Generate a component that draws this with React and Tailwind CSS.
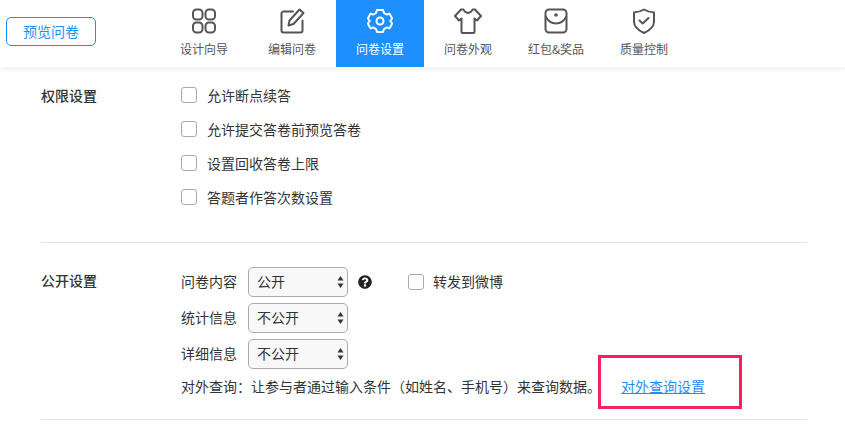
import React from "react";
import { FaQuestionCircle } from "react-icons/fa";

const font = { fontFamily: '"Noto Sans CJK SC", "Noto Sans", sans-serif' };

const GuideIcon = () => (
  <svg width="26" height="26" viewBox="0 0 26 26" fill="none" stroke="currentColor" strokeWidth="2">
    <rect x="2" y="1.5" width="9.5" height="10" rx="3.5" />
    <rect x="14.5" y="1.5" width="9.5" height="10" rx="3.5" />
    <rect x="2" y="14.5" width="9.5" height="10" rx="3.5" />
    <rect x="14.5" y="14.5" width="9.5" height="10" rx="3.5" />
  </svg>
);

const EditIcon = () => (
  <svg width="26" height="26" viewBox="0 0 26 26" fill="none" stroke="currentColor" strokeWidth="2" strokeLinejoin="round" strokeLinecap="round">
    <path d="M14 3.5H4.5a2 2 0 0 0-2 2v17a2 2 0 0 0 2 2h17a2 2 0 0 0 2-2V12.5" />
    <path d="M9.5 17.5l1-5L20.5 1.5l4 3.5L14.5 16z" />
  </svg>
);

const GearIcon = () => (
  <svg width="26" height="26" viewBox="0 0 26 26" fill="none" stroke="currentColor" strokeWidth="2" strokeLinejoin="round">
    <path d="M10 2h6l1 3 2.6 1.5 3-.7 2.6 4.7-2 2.5 2 2.5-2.6 4.7-3-.7L17 21l-1 3h-6l-1-3-2.600-1.500-3 .7L.8 15.500l2-2.500-2-2.500 2.600-4.700 3 .7L9 5z" />
    <circle cx="13" cy="13" r="3.500" />
  </svg>
);

const ShirtIcon = () => (
  <svg width="28" height="26" viewBox="0 0 28 26" fill="none" stroke="currentColor" strokeWidth="2" strokeLinejoin="round">
    <path d="M9.500 1.500C10.500 4 12 5 14 5s3.500-1 4.500-3.500h2.500L27 8l-4 4.500-2.500-2V24a1 1 0 0 1-1 1h-11a1 1 0 0 1-1-1V10.500l-2.500 2L1 8l6-6.500z" />
  </svg>
);

const PocketIcon = () => (
  <svg width="24" height="26" viewBox="0 0 24 26" fill="none" stroke="currentColor" strokeWidth="2" strokeLinejoin="round">
    <rect x="1.500" y="1.500" width="21" height="23" rx="3.500" />
    <path d="M1.500 8.500C4 13 8 15.500 12 15.500s8-2.500 10.500-7" />
    <circle cx="12" cy="7" r="1.800" fill="currentColor" stroke="none" />
  </svg>
);

const ShieldIcon = () => (
  <svg width="24" height="26" viewBox="0 0 24 26" fill="none" stroke="currentColor" strokeWidth="2" strokeLinejoin="round" strokeLinecap="round">
    <path d="M12 1.500c3 1.800 6 2.700 10 3v9c0 5.500-4.500 9-10 11.500C6.500 22.500 2 19 2 13.500v-9c4-.3 7-1.200 10-3z" />
    <path d="M7.500 12.500l3.200 3 5.800-5.500" />
  </svg>
);

const tabs = [
  { name: "设计向导", icon: <GuideIcon /> },
  { name: "编辑问卷", icon: <EditIcon /> },
  { name: "问卷设置", icon: <GearIcon />, active: true },
  { name: "问卷外观", icon: <ShirtIcon /> },
  { name: "红包&奖品", icon: <PocketIcon /> },
  { name: "质量控制", icon: <ShieldIcon /> },
];

const permissions = ["允许断点续答", "允许提交答卷前预览答卷", "设置回收答卷上限", "答题者作答次数设置"];

const Checkbox = () => <span className="block w-4 h-4 bg-white border border-[#aaaaaa] rounded-[3px] shrink-0" />;

const SelectBox = ({ value }) => (
  <div className="relative w-[100px] h-[30px]">
    <select
      defaultValue={value}
      style={font}
      className="appearance-none w-full h-full pl-[8px] pb-[2px] bg-[#f8f8f8] border border-[#aaaaaa] rounded-[5px] text-[14px] text-[#333333] outline-none"
    >
      <option>公开</option>
      <option>不公开</option>
    </select>
    <svg className="absolute right-[4px] top-[8px] pointer-events-none" width="7" height="14" viewBox="0 0 7 14" fill="#333333">
      <path d="M3.500 1L6.500 5.500H.5z" />
      <path d="M3.500 13L.5 8.500h6z" />
    </svg>
  </div>
);

const SelectRow = ({ label, value, children }) => (
  <div className="flex items-center h-[30px]">
    <span className="w-[67px] text-[14px] pb-[2px]">{label}</span>
    <SelectBox value={value} />
    {children}
  </div>
);

export default function App() {
  return (
    <div style={font} className="w-[845px] h-[441px] overflow-hidden bg-white text-[#333333] relative">
      <header className="h-[67px] flex bg-white shadow-[0_2px_6px_rgba(0,0,0,0.08)]">
        <div className="w-[160px] pl-[6px] pt-[17px]">
          <div className="w-[90px] h-[29px] flex items-center justify-center border border-[#1e8fff] rounded-[5px] text-[14px] text-[#1e8fff]">
            预览问卷
          </div>
        </div>
        {tabs.map((tab) => (
          <div
            key={tab.name}
            className={`w-[88px] flex flex-col items-center pt-[8px] ${tab.active ? "bg-[#1e8fff] text-white" : "text-[#555555]"}`}
          >
            <div className="h-[26px] flex items-center">{tab.icon}</div>
            <span className="text-[12px] leading-[18px] mt-[6px]">{tab.name}</span>
          </div>
        ))}
      </header>

      <section className="mx-[41px] w-[766px] h-[176px] flex border-b border-[#e2e2e2] pt-[17px]">
        <div className="w-[140px] text-[14px] leading-[22px] font-medium">权限设置</div>
        <div className="flex flex-col gap-[12px]">
          {permissions.map((text) => (
            <div key={text} className="flex items-center h-[22px] gap-[10px] text-[14px]">
              <Checkbox />
              <span>{text}</span>
            </div>
          ))}
        </div>
      </section>

      <section className="mx-[41px] w-[766px] h-[177px] flex border-b border-[#e2e2e2] pt-[24px]">
        <div className="w-[140px] text-[14px] leading-[26px] font-medium">公开设置</div>
        <div className="flex flex-col gap-[6px]">
          <SelectRow label="问卷内容" value="公开">
            <FaQuestionCircle className="ml-[10px] text-[#222222] text-[14px]" />
            <span className="ml-[36px] mr-[9px]"><Checkbox /></span>
            <span className="text-[14px] pb-[2px]">转发到微博</span>
          </SelectRow>
          <SelectRow label="统计信息" value="不公开" />
          <SelectRow label="详细信息" value="不公开" />
          <div className="flex text-[14px] leading-[22px]">
            <span className="w-[440px]">对外查询：让参与者通过输入条件（如姓名、手机号）来查询数据。</span>
            <a className="text-[#1e8fff] underline">对外查询设置</a>
          </div>
        </div>
      </section>

      <div className="absolute left-[598px] top-[355px] w-[144px] h-[54px] border-[3px] border-[#f5225f]" />
    </div>
  );
}
